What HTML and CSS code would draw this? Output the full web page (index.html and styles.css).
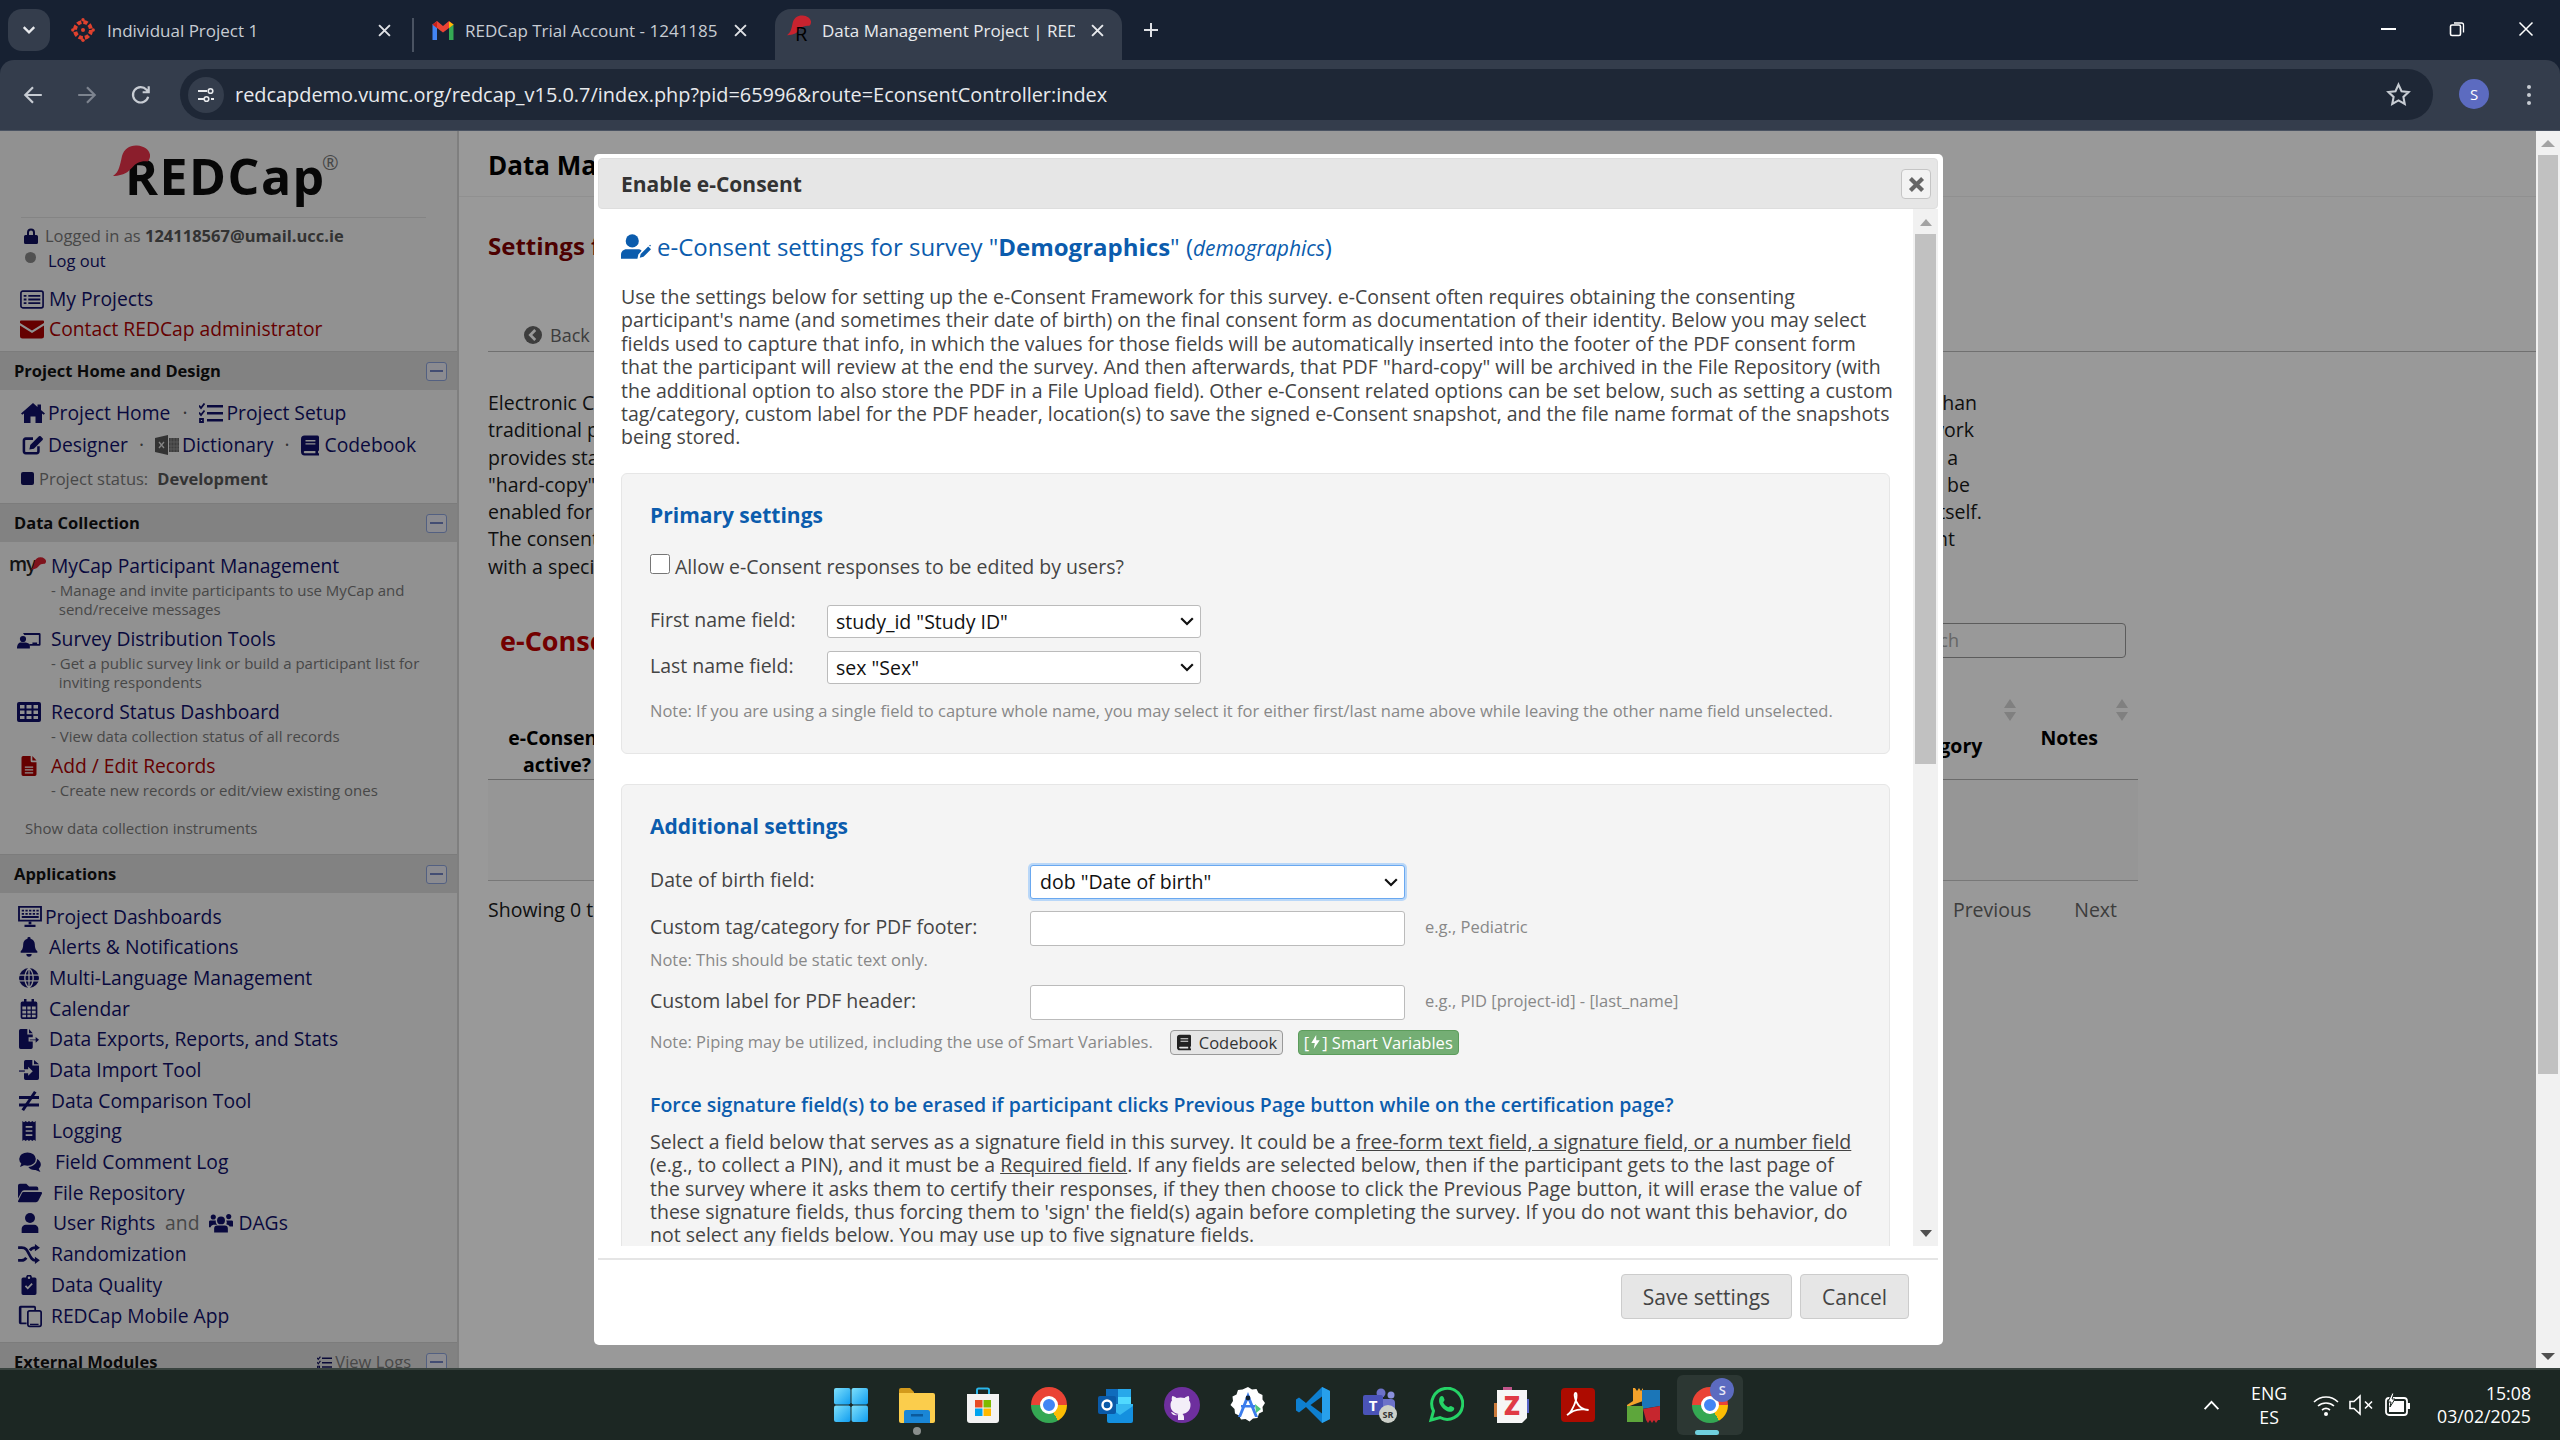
FILE: index.html
```html
<!DOCTYPE html>
<html lang="en">
<head>
<meta charset="utf-8">
<title>Data Management Project | REDCap</title>
<link rel="stylesheet" href="styles.css">
</head>
<body>
<svg class="sprite" xmlns="http://www.w3.org/2000/svg">
  <symbol id="i-list" viewBox="0 0 26 20"><rect x="1" y="1" width="24" height="18" rx="2" fill="none" stroke="currentColor" stroke-width="1.8"/><path d="M4 5h3v2H4zM9 5h13v2H9zM4 9h3v2H4zM9 9h13v2H9zM4 13h3v2H4zM9 13h13v2H9z" fill="currentColor"/></symbol>
  <symbol id="i-env" viewBox="0 0 24 18"><path d="M0 5v10.500A2.500 2.500 0 0 0 2.500 18h19a2.500 2.500 0 0 0 2.500-2.500V5l-12 7.500z M1 0h22a1 1 0 0 1 1 1v1.500l-12 7.500-12-7.500V1a1 1 0 0 1 1-1z" fill="currentColor"/></symbol>
  <symbol id="i-home" viewBox="0 0 24 20"><path d="M12 0 0 10.500l1.300 1.300L3 10.400V20h6.500v-6.500h5V20H21v-9.600l1.700 1.400 1.300-1.300L20 7V1.500h-3.500v2.400z" fill="currentColor"/></symbol>
  <symbol id="i-tasks" viewBox="0 0 24 20"><path d="M8 2h16v2.500H8zM8 9h16v2.500H8zM8 16h16v2.500H8z" fill="currentColor"/><path d="M0 2.500 2 5l3.500-4.500M0 9.500 2 12l3.500-4.500M1 16h3v3H1z" fill="none" stroke="currentColor" stroke-width="1.800"/></symbol>
  <symbol id="i-edit" viewBox="0 0 24 22"><path d="M18 12.500V18a2 2 0 0 1-2 2H4a2 2 0 0 1-2-2V6a2 2 0 0 1 2-2h8" fill="none" stroke="currentColor" stroke-width="2.800"/><path d="M9 11 18.500 1.500a1.500 1.500 0 0 1 2 0l2 2a1.500 1.500 0 0 1 0 2L13 15l-5 1z" fill="currentColor"/></symbol>
  <symbol id="i-xls" viewBox="0 0 24 20"><path d="M0 3 13 0v20L0 17z" fill="#555"/><path d="M14 3h10v14H14z" fill="#666"/><path d="M16 3v14M19 3v14M22 3v14M14 7h10M14 11h10M14 14h10" stroke="#999" stroke-width=".8"/><path d="m4 7 5 6M9 7l-5 6" stroke="#ddd" stroke-width="1.300"/></symbol>
  <symbol id="i-book" viewBox="0 0 20 22"><path d="M4 0h14a2 2 0 0 1 2 1.500V16a1 1 0 0 1-1 1v2.500h1V22H4a4 4 0 0 1-4-4V4a4 4 0 0 1 4-4zM5 5v1.500h11V5zM5 8.500V10h11V8.500zM4 17a1.300 1.300 0 0 0 0 2.500h12V17z" fill="currentColor" fill-rule="evenodd"/></symbol>
  <symbol id="i-survey" viewBox="0 0 28 22"><path d="M7 4h19a1.500 1.500 0 0 1 1.500 1.500v12a1.500 1.500 0 0 1-1.500 1.500H15v-2.200h3V15h5.500v1.800h2V6.200H8.500z" fill="currentColor"/><circle cx="7" cy="11" r="3.600" fill="currentColor"/><path d="M0 22c0-4.500 2-7 4-7h6c2 0 4 1.500 5 2v5z" fill="currentColor"/></symbol>
  <symbol id="i-table" viewBox="0 0 24 20"><path d="M2 0h20a2 2 0 0 1 2 2v16a2 2 0 0 1-2 2H2a2 2 0 0 1-2-2V2a2 2 0 0 1 2-2zm1 3v3.500h4.500V3zm6.500 0v3.500h5V3zm7 0v3.500H21V3zM3 8.500V12h4.500V8.500zm6.500 0V12h5V8.500zm7 0V12H21V8.500zM3 14v3h4.500v-3zm6.500 0v3h5v-3zm7 0v3H21v-3z" fill="currentColor" fill-rule="evenodd"/></symbol>
  <symbol id="i-file" viewBox="0 0 18 24"><path d="M2 0h9v6a1.500 1.500 0 0 0 1.500 1.500H18V22a2 2 0 0 1-2 2H2a2 2 0 0 1-2-2V2a2 2 0 0 1 2-2zm11 0 5 5.500h-5zM4 12.500v1.500h10v-1.500zm0 3.500v1.500h10V16zm0 3.500V21h10v-1.500z" fill="currentColor" fill-rule="evenodd"/></symbol>
  <symbol id="i-monitor" viewBox="0 0 26 24"><path d="M1 1h24v15H1z" fill="none" stroke="currentColor" stroke-width="2"/><path d="M4 4h2.500v2H4zM8 4h2.500v2H8zM12 4h2.500v2H12zM16 4h2.500v2H16zM20 4h2.500v2H20zM4 7.500h2.500v2H4zM8 7.500h2.500v2H8zM12 7.500h2.500v2H12zM16 7.500h2.500v2H16zM20 7.500h2.500v2H20zM4 11h18.500v2H4zM11.500 17h3v3h-3zM7 20.500h12V23H7z" fill="currentColor"/></symbol>
  <symbol id="i-bell" viewBox="0 0 20 24"><path d="M10 0a1.800 1.800 0 0 1 1.800 2.200C15 3 17 5.700 17 9c0 5 1.500 6.500 3 8.200V19H0v-1.800C1.500 15.500 3 14 3 9c0-3.300 2-6 5.200-6.800A1.800 1.800 0 0 1 10 0zM6.800 20.500h6.400a3.200 3.200 0 0 1-6.400 0z" fill="currentColor"/></symbol>
  <symbol id="i-globe" viewBox="0 0 24 24"><circle cx="12" cy="12" r="12" fill="currentColor"/><path d="M12 0c-3.300 3-5 7-5 12s1.700 9 5 12c3.300-3 5-7 5-12s-1.700-9-5-12zM0 8.500h24M0 15.500h24M12 0v24" fill="none" stroke="#f2f2f2" stroke-width="1.600"/></symbol>
  <symbol id="i-cal" viewBox="0 0 20 24"><path d="M4 0h3v3h6V0h3v3h2a2 2 0 0 1 2 2v17a2 2 0 0 1-2 2H2a2 2 0 0 1-2-2V5a2 2 0 0 1 2-2h2zM2 9v3.500h4.500V9zm6 0v3.500h4V9zm5.500 0v3.500H18V9zM2 14v3.500h4.500V14zm6 0v3.500h4V14zm5.500 0v3.500H18V14zM2 19v3h4.500v-3zm6 0v3h4v-3zm5.500 0v3H18v-3z" fill="currentColor" fill-rule="evenodd"/></symbol>
  <symbol id="i-fexport" viewBox="0 0 24 24"><path d="M2 0h8v6.500h6.500V10h-5v5h5v7a2 2 0 0 1-2 2H2a2 2 0 0 1-2-2V2a2 2 0 0 1 2-2zm10 0 4.500 5H12z" fill="currentColor"/><path d="M13 12.500h7v-3l4 3.500-4 3.500v-3h-7z" fill="currentColor"/></symbol>
  <symbol id="i-fimport" viewBox="0 0 24 24"><path d="M8 0h8v6.500h8V22a2 2 0 0 1-2 2H8a2 2 0 0 1-2-2v-6h5v3l5.500-5.500L11 8v3H6V2a2 2 0 0 1 2-2zm10 0 6 5h-6z" fill="currentColor"/><path d="M0 12.500h7v1.500H0z" fill="currentColor"/></symbol>
  <symbol id="i-neq" viewBox="0 0 20 20"><path d="M0 5h20v3H0zM0 12.500h20v3H0z" fill="currentColor"/><path d="m15 0 2.500 1.500L5 20l-2.500-1.500z" fill="currentColor"/></symbol>
  <symbol id="i-receipt" viewBox="0 0 16 24"><path d="M0 0l2 1.500L4 0l2 1.500L8 0l2 1.500L12 0l2 1.500L16 0v24l-2-1.500-2 1.500-2-1.500L8 24l-2-1.500L4 24l-2-1.500L0 24zM4 6v2h8V6zm0 5v2h8v-2zm0 5v2h8v-2z" fill="currentColor" fill-rule="evenodd"/></symbol>
  <symbol id="i-comments" viewBox="0 0 26 24"><ellipse cx="10" cy="8.500" rx="10" ry="8" fill="currentColor"/><path d="m3 13-2 5 7-3z" fill="currentColor"/><path d="M21.500 8.500c2.700 1.500 4.500 4 4.500 6.500 0 2-1 3.500-2.500 5l2 4-6-2.400c-3.500.5-7-1-8.500-3.600 5.500-.2 10.500-4 10.500-9.500z" fill="currentColor"/></symbol>
  <symbol id="i-folder" viewBox="0 0 26 20"><path d="M2 0h7l3 3h8a2 2 0 0 1 2 2v2H6.500a3 3 0 0 0-2.700 1.800L0 16V2a2 2 0 0 1 2-2z" fill="currentColor"/><path d="M6 9h19a1 1 0 0 1 1 1.500l-4 8A3 3 0 0 1 19.500 20H1a1 1 0 0 1-.8-1.500l4-8.200A2 2 0 0 1 6 9z" fill="currentColor"/></symbol>
  <symbol id="i-user" viewBox="0 0 20 24"><circle cx="10" cy="6" r="6" fill="currentColor"/><path d="M5 14h10a5 5 0 0 1 5 5v5H0v-5a5 5 0 0 1 5-5z" fill="currentColor"/></symbol>
  <symbol id="i-users" viewBox="0 0 28 22"><circle cx="14" cy="8" r="4.600" fill="currentColor"/><path d="M9.500 14h9a3.500 3.500 0 0 1 3.500 3.500V22H6v-4.500A3.500 3.500 0 0 1 9.500 14z" fill="currentColor"/><circle cx="5" cy="4" r="3" fill="currentColor"/><circle cx="23" cy="3.500" r="3" fill="currentColor"/><path d="M1 8h7c-.5 2.500.5 4 1.500 5H5c-1.800.5-3 1.500-3 3H0v-6a2 2 0 0 1 1-2zM20 8h7a2 2 0 0 1 1 2v5h-4c-.5-1-1.500-2-4-2.500 1-1 1-3 0-4.500z" fill="currentColor"/></symbol>
  <symbol id="i-random" viewBox="0 0 24 22"><path d="M0 4h4c5 0 6 3 8 7s3.500 7 7 7h1" fill="none" stroke="currentColor" stroke-width="3"/><path d="M0 18h4c2.500 0 4-1.500 5-3M13 7c1.500-2 3-3 6-3h1" fill="none" stroke="currentColor" stroke-width="3"/><path d="m18.500 0 5.500 4-5.500 4zM18.500 14l5.500 4-5.500 4z" fill="currentColor"/></symbol>
  <symbol id="i-clip" viewBox="0 0 18 24"><path d="M2 3h3.500a3.500 3.500 0 0 1 7 0H16a2 2 0 0 1 2 2v17a2 2 0 0 1-2 2H2a2 2 0 0 1-2-2V5a2 2 0 0 1 2-2zm7-1.300a1.500 1.500 0 1 0 0 3 1.500 1.500 0 0 0 0-3zM13.500 11l-1.500-1.400-4.500 4.800-2-2L4 13.800l3.500 3.600z" fill="currentColor" fill-rule="evenodd"/></symbol>
  <symbol id="i-mobile" viewBox="0 0 28 26"><path d="M3 1h16a2 2 0 0 1 2 2v3h-2V3.500H4v17h6v2H3a2 2 0 0 1-2-2V3a2 2 0 0 1 2-2z" fill="currentColor"/><rect x="11.500" y="7" width="15.500" height="18" rx="2" fill="none" stroke="currentColor" stroke-width="2"/><path d="M14 22h10v1.500H14z" fill="currentColor"/></symbol>
  <symbol id="i-hat" viewBox="0 0 37 32"><path d="M0 31c3-2 5-5 6-8 1-3 2-7 3-12C11 4 17 0 24 .5c7 .5 12 4 13 9 .3 3-.5 5-2.500 7-3-.5-7 0-10 1.500-4 2-6 6-10 9-3 2-9 4-14.500 4z" fill="currentColor"/></symbol>
  <symbol id="i-back" viewBox="0 0 20 20"><circle cx="10" cy="10" r="10" fill="currentColor"/><path d="M12.500 4.500 7 10l5.500 5.500" fill="none" stroke="#fff" stroke-width="3"/></symbol>
  <symbol id="i-consent" viewBox="0 0 32 26"><circle cx="12" cy="7" r="7" fill="currentColor"/><path d="M6 16h12c1.500 0 3 .5 4 1.500l-3.500 4-1 4.500H0v-4c0-3.500 2.500-6 6-6z" fill="currentColor"/><path d="M20 25l1-4 8-8 3 3-8 8zM30 12l1-1 1 1-1 1z" fill="currentColor"/></symbol>
  <symbol id="i-bolt" viewBox="0 0 12 20"><path d="M7 0 0 11.500h5L3.500 20 12 7.500H7z" fill="currentColor"/></symbol>
  <symbol id="i-chev" viewBox="0 0 14 9"><path d="m1.200 1.200 5.800 5.800 5.800-5.800" fill="none" stroke="currentColor" stroke-width="2.200"/></symbol>
</svg>

<div class="screen">
  <header class="browser">
    <div class="tabstrip">
      <div class="tab-menu"><svg class="tab-menu-ico" viewBox="0 0 12 8"><path d="m1.500 1.500 4.500 4.500 4.500-4.500" fill="none" stroke="#e8eaed" stroke-width="2"/></svg></div>
      <div class="tab tab-first">
        <svg class="fav" viewBox="0 0 24 24"><circle cx="12" cy="12" r="8" fill="none" stroke="#e0412e" stroke-width="4" stroke-dasharray="4.300 2"/><circle cx="12" cy="12" r="2" fill="#e0412e"/><circle cx="12" cy="1.800" r="1.700" fill="#e0412e"/><circle cx="12" cy="22.200" r="1.700" fill="#e0412e"/><circle cx="1.800" cy="12" r="1.700" fill="#e0412e"/><circle cx="22.200" cy="12" r="1.700" fill="#e0412e"/></svg>
        <span class="tab-title">Individual Project 1</span>
        <svg class="tab-x" viewBox="0 0 12 12"><path d="m1 1 10 10M11 1 1 11" stroke="#dfe1e5" stroke-width="1.800"/></svg>
      </div>
      <div class="tab-sep"></div>
      <div class="tab tab-second">
        <svg class="fav" viewBox="0 0 24 20"><path d="M1.500 20V4l4.500 3v13z" fill="#4285f4"/><path d="M22.500 20V4L18 7v13z" fill="#34a853"/><path d="M1.500 4.500 6 1l6 5 6-5 4.500 3.500L18 8l-6 4.500L6 8z" fill="#ea4335"/><path d="M18 1.500 22.500 4.500 18 8z" fill="#fbbc04"/><path d="M6 1.500 1.500 4.500 6 8z" fill="#c5221f"/></svg>
        <span class="tab-title">REDCap Trial Account - 124118567</span>
        <svg class="tab-x" viewBox="0 0 12 12"><path d="m1 1 10 10M11 1 1 11" stroke="#dfe1e5" stroke-width="1.800"/></svg>
      </div>
      <div class="tab tab-active">
        <span class="fav fav-red"><svg class="fav-hat" viewBox="0 0 37 32"><use href="#i-hat"/></svg><span class="fav-r">R</span></span>
        <span class="tab-title">Data Management Project | REDCap</span>
        <svg class="tab-x" viewBox="0 0 12 12"><path d="m1 1 10 10M11 1 1 11" stroke="#e8eaed" stroke-width="1.800"/></svg>
      </div>
      <svg class="tab-plus" viewBox="0 0 16 16"><path d="M8 1v14M1 8h14" stroke="#dfe1e5" stroke-width="2"/></svg>
      <div class="win-ctrl">
        <span class="win-min"></span>
        <svg class="win-ico" viewBox="0 0 16 16"><rect x="1.500" y="4" width="10" height="10.500" rx="1.500" fill="none" stroke="#fff" stroke-width="1.600"/><path d="M5 2h7.500A2 2 0 0 1 14.500 4v7.500" fill="none" stroke="#fff" stroke-width="1.300"/></svg>
        <svg class="win-ico" viewBox="0 0 16 16"><path d="m1.500 1.500 13 13M14.500 1.500l-13 13" stroke="#fff" stroke-width="1.500"/></svg>
      </div>
    </div>
    <div class="toolbar">
      <svg class="nav-ico" viewBox="0 0 20 20"><path d="M18 10H3M10 3l-7 7 7 7" fill="none" stroke="#c7ccd3" stroke-width="2"/></svg>
      <svg class="nav-ico nav-off" viewBox="0 0 20 20"><path d="M2 10h15M10 3l7 7-7 7" fill="none" stroke="#7d848f" stroke-width="2"/></svg>
      <svg class="nav-ico" viewBox="0 0 20 20"><path d="M16.500 11.500a7 7 0 1 1-1.500-6.300L17 7.500M17 2v5.500h-5.500" fill="none" stroke="#c7ccd3" stroke-width="2"/></svg>
      <div class="omnibox">
        <div class="site-ico"><svg class="site-svg" viewBox="0 0 20 20"><path d="M2 6h9M15 14h3M2 14h6" stroke="#e8eaed" stroke-width="1.800"/><circle cx="14.500" cy="6" r="2.300" fill="none" stroke="#e8eaed" stroke-width="1.600"/><circle cx="10.500" cy="14" r="2.300" fill="none" stroke="#e8eaed" stroke-width="1.600"/></svg></div>
        <span class="url">redcapdemo.vumc.org/redcap_v15.0.7/index.php?pid=65996&amp;route=EconsentController:index</span>
        <svg class="star" viewBox="0 0 24 24"><path d="m12 2.500 2.900 6.300 6.800.8-5 4.700 1.300 6.800-6-3.400-6 3.400 1.300-6.800-5-4.700 6.800-.8z" fill="none" stroke="#c7ccd3" stroke-width="2"/></svg>
      </div>
      <div class="avatar">S</div>
      <svg class="kebab" viewBox="0 0 6 22"><circle cx="3" cy="3" r="2" fill="#c7ccd3"/><circle cx="3" cy="11" r="2" fill="#c7ccd3"/><circle cx="3" cy="19" r="2" fill="#c7ccd3"/></svg>
    </div>
  </header>

  <div class="page">
    <aside class="sidebar">
      <div class="logo">
        <span class="logo-text">REDCap</span><span class="logo-reg">®</span>
        <svg class="logo-hat" viewBox="0 0 37 32"><use href="#i-hat"/></svg>
      </div>
      <div class="user-block">
        <div class="user-row"><svg class="ico-lock" viewBox="0 0 14 16"><path d="M3 7V4.500a4 4 0 0 1 8 0V7h1.500A1.500 1.500 0 0 1 14 8.500v6a1.500 1.500 0 0 1-1.500 1.500h-11A1.500 1.500 0 0 1 0 14.500v-6A1.500 1.500 0 0 1 1.500 7zm2 0h4V4.500a2 2 0 0 0-4 0z" fill="#10105c" fill-rule="evenodd"/></svg><span>Logged in as <b>124118567@umail.ucc.ie</b></span></div>
        <div class="user-row user-out"><span class="ico-out"></span><span class="link">Log out</span></div>
      </div>
      <div class="top-links">
        <div class="top-link link"><svg class="ico-top"><use href="#i-list"/></svg>My Projects</div>
        <div class="top-link red"><svg class="ico-top"><use href="#i-env"/></svg>Contact REDCap administrator</div>
      </div>

      <div class="side-head"><span>Project Home and Design</span><span class="collapse"></span></div>
      <div class="home-block">
        <div class="home-row link"><svg class="ico-h"><use href="#i-home"/></svg>Project Home<span class="dot dot-w">·</span><svg class="ico-h"><use href="#i-tasks"/></svg>Project Setup</div>
        <div class="home-row link"><svg class="ico-h"><use href="#i-edit"/></svg>Designer<span class="dot">·</span><svg class="ico-h"><use href="#i-xls"/></svg>Dictionary<span class="dot">·</span><svg class="ico-h ico-b"><use href="#i-book"/></svg>Codebook</div>
        <div class="status-row"><span class="status-sq"></span>Project status:<b>Development</b></div>
      </div>

      <div class="side-head"><span>Data Collection</span><span class="collapse"></span></div>
      <div class="dc-block">
        <div class="dc-item"><div class="dc-link link"><span class="mycap">my<svg class="mycap-hat" viewBox="0 0 37 32"><use href="#i-hat"/></svg></span>MyCap Participant Management</div><div class="dc-desc">- Manage and invite participants to use MyCap and<br>&nbsp; send/receive messages</div></div>
        <div class="dc-item"><div class="dc-link link"><svg class="ico-dc"><use href="#i-survey"/></svg>Survey Distribution Tools</div><div class="dc-desc">- Get a public survey link or build a participant list for<br>&nbsp; inviting respondents</div></div>
        <div class="dc-item"><div class="dc-link link"><svg class="ico-dc"><use href="#i-table"/></svg>Record Status Dashboard</div><div class="dc-desc">- View data collection status of all records</div></div>
        <div class="dc-item"><div class="dc-link red"><svg class="ico-dc"><use href="#i-file"/></svg>Add / Edit Records</div><div class="dc-desc">- Create new records or edit/view existing ones</div></div>
        <div class="dc-show">Show data collection instruments</div>
      </div>

      <div class="side-head side-apps"><span>Applications</span><span class="collapse"></span></div>
      <div class="apps link">
        <div class="app"><svg class="ico-a ico-mon"><use href="#i-monitor"/></svg>Project Dashboards</div>
        <div class="app"><svg class="ico-a"><use href="#i-bell"/></svg>Alerts &amp; Notifications</div>
        <div class="app"><svg class="ico-a"><use href="#i-globe"/></svg>Multi-Language Management</div>
        <div class="app"><svg class="ico-a"><use href="#i-cal"/></svg>Calendar</div>
        <div class="app"><svg class="ico-a"><use href="#i-fexport"/></svg>Data Exports, Reports, and Stats</div>
        <div class="app"><svg class="ico-a"><use href="#i-fimport"/></svg>Data Import Tool</div>
        <div class="app"><svg class="ico-a ico-nudge"><use href="#i-neq"/></svg>Data Comparison Tool</div>
        <div class="app"><svg class="ico-a ico-nudge2"><use href="#i-receipt"/></svg>Logging</div>
        <div class="app"><svg class="ico-a ico-wide ico-wide2"><use href="#i-comments"/></svg>Field Comment Log</div>
        <div class="app"><svg class="ico-a ico-wide"><use href="#i-folder"/></svg>File Repository</div>
        <div class="app"><svg class="ico-a ico-wide"><use href="#i-user"/></svg>User Rights<span class="and">and</span><svg class="ico-users"><use href="#i-users"/></svg>DAGs</div>
        <div class="app"><svg class="ico-a ico-nudge"><use href="#i-random"/></svg>Randomization</div>
        <div class="app"><svg class="ico-a ico-nudge"><use href="#i-clip"/></svg>Data Quality</div>
        <div class="app"><svg class="ico-a ico-mob"><use href="#i-mobile"/></svg>REDCap Mobile App</div>
      </div>
      <div class="side-head side-last"><span>External Modules</span><span class="viewlogs"><svg class="ico-vl"><use href="#i-tasks"/></svg>View Logs</span><span class="collapse"></span></div>
    </aside>

    <main class="content">
      <div class="proj-title">Data Management Project</div>
      <div class="content-body">
        <div class="settings-title">Settings for e-Consent</div>
        <div class="back-tabs"><div class="back-tab"><svg class="ico-back"><use href="#i-back"/></svg>Back to Online Designer</div></div>
        <div class="intro">
          <div class="intro-line e1"><span>Electronic Consent</span><span>than</span></div>
          <div class="intro-line e2"><span>traditional paper</span><span>work</span></div>
          <div class="intro-line e3"><span>provides standard</span><span>a</span></div>
          <div class="intro-line e4"><span>"hard-copy" of the</span><span>be</span></div>
          <div class="intro-line e5"><span>enabled for a</span><span>itself.</span></div>
          <div class="intro-line e6"><span>The consent form</span><span>nt</span></div>
          <div class="intro-line"><span>with a specific</span></div>
        </div>
        <div class="econ-row"><div class="econ-title">e-Consent</div><div class="search">Search</div></div>
        <div class="thead">
          <div class="th-first">e-Consent<br>active?</div>
          <div class="th-cat">Category</div>
          <div class="sort sort-a"></div>
          <div class="th-notes">Notes</div>
          <div class="sort"></div>
        </div>
        <div class="tbody-empty"></div>
        <div class="tfoot"><span>Showing 0 to 0</span><span class="pager"><span>Previous</span><span>Next</span></span></div>
      </div>
    </main>

    <div class="overlay"></div>

    <div class="page-scroll">
      <span class="arr-up arr-dark"></span>
      <div class="page-thumb"></div>
      <span class="arr-down arr-dark"></span>
    </div>
  </div>

  <section class="modal">
    <div class="modal-title"><span>Enable e-Consent</span><button class="modal-x"><svg class="modal-x-ico" viewBox="0 0 14 14"><path d="m2 2 10 10M12 2 2 12" stroke="#666" stroke-width="3.400"/></svg></button></div>
    <div class="modal-mid">
      <div class="modal-body">
        <div class="m-head"><svg class="ico-consent"><use href="#i-consent"/></svg><span>e-Consent settings for survey "<b>Demographics</b>" (<i>demographics</i>)</span></div>
        <p class="m-text m-intro">Use the settings below for setting up the e-Consent Framework for this survey. e-Consent often requires obtaining the consenting<br>participant's name (and sometimes their date of birth) on the final consent form as documentation of their identity. Below you may select<br>fields used to capture that info, in which the values for those fields will be automatically inserted into the footer of the PDF consent form<br>that the participant will review at the end the survey. And then afterwards, that PDF "hard-copy" will be archived in the File Repository (with<br>the additional option to also store the PDF in a File Upload field). Other e-Consent related options can be set below, such as setting a custom<br>tag/category, custom label for the PDF header, location(s) to save the signed e-Consent snapshot, and the file name format of the snapshots<br>being stored.</p>

        <div class="box box-primary">
          <div class="box-title">Primary settings</div>
          <label class="check-row"><input class="check" type="checkbox">Allow e-Consent responses to be edited by users?</label>
          <div class="f-row f-first"><span class="f-label f-short">First name field:</span><span class="sel-wrap sel-a"><select class="sel"><option>study_id "Study ID"</option></select><svg class="sel-chev"><use href="#i-chev"/></svg></span></div>
          <div class="f-row f-second"><span class="f-label f-short">Last name field:</span><span class="sel-wrap sel-a"><select class="sel"><option>sex "Sex"</option></select><svg class="sel-chev"><use href="#i-chev"/></svg></span></div>
          <div class="note note-a">Note: If you are using a single field to capture whole name, you may select it for either first/last name above while leaving the other name field unselected.</div>
        </div>

        <div class="box box-add">
          <div class="box-title">Additional settings</div>
          <div class="f-row f-dob"><span class="f-label f-long">Date of birth field:</span><span class="sel-wrap sel-b"><select class="sel sel-focus"><option>dob "Date of birth"</option></select><svg class="sel-chev"><use href="#i-chev"/></svg></span></div>
          <div class="f-row f-tag"><span class="f-label f-long">Custom tag/category for PDF footer:</span><input class="txt" type="text"><span class="eg">e.g., Pediatric</span></div>
          <div class="note note-b">Note: This should be static text only.</div>
          <div class="f-row f-hdr"><span class="f-label f-long">Custom label for PDF header:</span><input class="txt" type="text"><span class="eg">e.g., PID [project-id] - [last_name]</span></div>
          <div class="pipe-row"><span class="note">Note: Piping may be utilized, including the use of Smart Variables.</span><span class="btn-code"><svg class="ico-code"><use href="#i-book"/></svg>Codebook</span><span class="btn-smart">[<svg class="ico-bolt"><use href="#i-bolt"/></svg>] Smart Variables</span></div>
          <div class="force-title">Force signature field(s) to be erased if participant clicks Previous Page button while on the certification page?</div>
          <p class="m-text m-force">Select a field below that serves as a signature field in this survey. It could be a <u>free-form text field, a signature field, or a number field</u><br>(e.g., to collect a PIN), and it must be a <u>Required field</u>. If any fields are selected below, then if the participant gets to the last page of<br>the survey where it asks them to certify their responses, if they then choose to click the Previous Page button, it will erase the value of<br>these signature fields, thus forcing them to 'sign' the field(s) again before completing the survey. If you do not want this behavior, do<br>not select any fields below. You may use up to five signature fields.</p>
        </div>
      </div>
      <div class="modal-scroll">
        <span class="arr-up"></span>
        <div class="modal-thumb"></div>
        <span class="arr-down"></span>
      </div>
    </div>
    <div class="modal-foot"><button class="btn">Save settings</button><button class="btn">Cancel</button></div>
  </section>

  <footer class="taskbar">
    <div class="task-icons">
      <span class="task"><svg class="t-ico" viewBox="0 0 36 36"><defs><linearGradient id="w" x1="0" y1="0" x2="1" y2="1"><stop offset="0" stop-color="#7ee0fb"/><stop offset="1" stop-color="#0f9df0"/></linearGradient></defs><rect x="1" y="1" width="16.500" height="16.500" rx="2" fill="url(#w)"/><rect x="18.500" y="1" width="16.500" height="16.500" rx="2" fill="url(#w)"/><rect x="1" y="18.500" width="16.500" height="16.500" rx="2" fill="url(#w)"/><rect x="18.500" y="18.500" width="16.500" height="16.500" rx="2" fill="url(#w)"/></svg></span>
      <span class="task"><svg class="t-ico" viewBox="0 0 36 36"><path d="M0 3a2 2 0 0 1 2-2h9l4 4v4H0z" fill="#d39a1c"/><path d="M0 6h34a2 2 0 0 1 2 2v26a2 2 0 0 1-2 2H2a2 2 0 0 1-2-2z" fill="#fbcd4c"/><path d="M7 23h22a2 2 0 0 1 2 2v11H5V25a2 2 0 0 1 2-2z" fill="#1a86d6"/><rect x="12" y="27" width="12" height="2.500" fill="#0b5a9c"/></svg><i class="t-dot"></i></span>
      <span class="task"><svg class="t-ico" viewBox="0 0 36 36"><path d="M12 8V3a1.500 1.500 0 0 1 1.500-1.500h9A1.500 1.500 0 0 1 24 3v5" fill="none" stroke="#29b6ea" stroke-width="2"/><path d="M2 7h32v26a3 3 0 0 1-3 3H5a3 3 0 0 1-3-3z" fill="#f3f3f3"/><rect x="10" y="13" width="7.500" height="7.500" fill="#e74c25"/><rect x="18.500" y="13" width="7.500" height="7.500" fill="#7fba00"/><rect x="10" y="21.500" width="7.500" height="7.500" fill="#00a4ef"/><rect x="18.500" y="21.500" width="7.500" height="7.500" fill="#ffb900"/></svg></span>
      <span class="task"><span class="chrome-ico"><span class="chrome-in"></span></span></span>
      <span class="task"><svg class="t-ico" viewBox="0 0 36 36"><rect x="9" y="2" width="25" height="16" fill="#0f6cbd"/><rect x="21" y="2" width="13" height="8" fill="#28a8ea"/><rect x="21" y="10" width="13" height="8" fill="#50d9ff"/><path d="M10 17h26v17a2 2 0 0 1-2 2H12a2 2 0 0 1-2-2z" fill="#1490df"/><path d="m10 19 13 9 13-9v-2H10z" fill="#35b8f1"/><rect x="1" y="9" width="18" height="18" rx="2" fill="#0a5aa8"/><circle cx="10" cy="18" r="4.500" fill="none" stroke="#fff" stroke-width="2.400"/></svg></span>
      <span class="task"><svg class="t-ico" viewBox="0 0 36 36"><circle cx="18" cy="18" r="18" fill="#6e2f9e"/><path d="M14 33v-5c-5 1-6-1-7-3 2 0 3 1 4 2 1 1 3 1 3.500 0-5-1-8-4-8-9 0-2 .5-3.500 1.500-4.500-.5-1.500-.3-3 .3-4.500 1.700 0 3 1 4.200 2 2.800-.7 5.400-.7 8 0 1.200-1 2.500-2 4.200-2 .6 1.500.8 3 .3 4.500 1 1 1.500 2.500 1.500 4.500 0 5-3 8-8 9 1 .7 1.500 2 1.500 3.500V33z" fill="#f3eef8"/></svg></span>
      <span class="task"><svg class="t-ico" viewBox="0 0 36 36"><path d="m18 0 4 2.500 4.500-.5 2 4 4 2 .0 4.500 2.500 3.500-2.500 4 .5 4.500-4 2-1.500 4.500-4.500.5-3.500 3-4-2.500-4.500.5-2-4-4-2-.5-4.500L.5 18 3 14l-.5-4.500 4-2L8 3l4.500-.5z" fill="#fff"/><path d="m18 5-10 25h3l7-17 7 17h3z" fill="#3b7ded"/><path d="M11 18h14v2.500H11z" fill="#3b7ded"/><path d="m25 17 6 5-5 4z" fill="#4cc47a"/><circle cx="18" cy="11" r="2.400" fill="#123"/></svg></span>
      <span class="task"><svg class="t-ico" viewBox="0 0 36 36"><path d="M26 0 10 16 3 10.500 0 12.500v11L3 25.500l7-5.500 16 16 8-4V4z" fill="#0e7fd0"/><path d="M26 9.500v17L14.500 18z" fill="#1c2723"/><path d="M26 0l8 4v28l-8 4z" fill="#27a0ec"/></svg></span>
      <span class="task"><svg class="t-ico" viewBox="0 0 36 36"><circle cx="19" cy="6" r="4.500" fill="#6c72c9"/><circle cx="29" cy="8" r="3.500" fill="#8a90dd"/><path d="M14 12h15a4 4 0 0 1 4 4v10H14z" fill="#6c72c9"/><rect x="1" y="8" width="20" height="20" rx="2" fill="#4a53b8"/><text class="t-letter" x="11" y="23.500">T</text><circle cx="26" cy="27" r="9" fill="#ccd0c9"/><text class="t-sr" x="26" y="30.500">SR</text></svg></span>
      <span class="task"><svg class="t-ico" viewBox="0 0 36 36"><path d="M3 33 5.500 24A15.500 15.500 0 1 1 12 30.500z" fill="none" stroke="#25d366" stroke-width="3"/><path d="M12 10c1-1 2.500-1.500 3.500 0l1 2.500c.3 1-1 2-1.300 2.800.8 2 2.800 4 5 5 1-.3 1.800-1.500 2.800-1.300l2.500 1.200c1.300.7.700 2.500 0 3.300-2 2-5 1.500-8-.3-3-2-5-4.500-6-7-.7-2.300-.5-4.500.500-6.200z" fill="#25d366"/></svg></span>
      <span class="task"><svg class="t-ico" viewBox="0 0 36 36"><rect x="9" y="0" width="9" height="6" fill="#c0558a"/><path d="M0 16h5v14H0z" fill="#ca7a3a"/><path d="M32 12h3v14h-3z" fill="#5865c7"/><path d="M3 3h30v28l-5 5H3z" fill="#f6f6f6"/><text class="t-z" x="18" y="28">Z</text></svg></span>
      <span class="task"><svg class="t-ico" viewBox="0 0 36 36"><rect x="1" y="1" width="34" height="34" rx="4" fill="#ad0b00"/><path d="M7 28c3-1 7-8 9-15 .7-3 1-7-.5-7-1.500 0-1 5 1 9 2.500 5 6 8 12 8-3-1-10-1-15 1-2 1-5 3-6.500 4z" fill="none" stroke="#fff" stroke-width="1.800"/></svg></span>
      <span class="task"><svg class="t-ico" viewBox="0 0 36 36"><path d="M1 18 7 14V1h2l2 3 2-3 2 3 2-3v13L1 20z" fill="#f4a22b"/><path d="M16 3h18v16l-18 3z" fill="#1b76b8"/><path d="M1 19h16v16H1z" fill="#5da63b"/><path d="M17 22l17-3v14h-2l-2 3-2-3-2 3-2-3-2 3-2-3z" fill="#c6262e"/></svg></span>
      <span class="task task-active"><span class="chrome-ico"><span class="chrome-in"></span></span><span class="t-badge">S</span><i class="t-bar"></i></span>
    </div>
    <div class="tray">
      <svg class="tray-chev" viewBox="0 0 18 12"><path d="m1.500 10 7.500-8 7.500 8" fill="none" stroke="#fff" stroke-width="2"/></svg>
      <div class="lang">ENG<br>ES</div>
      <svg class="tray-wifi" viewBox="0 0 26 22"><path d="M1 8a17 17 0 0 1 24 0M5 12a12 12 0 0 1 16 0M9 16a6.500 6.500 0 0 1 8 0" fill="none" stroke="#fff" stroke-width="1.600"/><circle cx="13" cy="20" r="2" fill="#fff"/></svg>
      <svg class="tray-vol" viewBox="0 0 26 22"><path d="M1 7.500h4L11 2v18l-6-5.500H1z" fill="none" stroke="#fff" stroke-width="1.600"/><path d="m16 7.500 7 7M23 7.500l-7 7" stroke="#fff" stroke-width="1.600"/></svg>
      <svg class="tray-bat" viewBox="0 0 26 24"><rect x="1" y="5" width="21" height="17" rx="3" fill="none" stroke="#fff" stroke-width="1.800"/><rect x="4" y="8" width="15" height="11" fill="#fff"/><path d="M22 10h3v6h-3z" fill="#fff"/><path d="M7 0 3 9h3l-1 5 5-8H7l2-6z" fill="#fff" stroke="#1c2723"/></svg>
      <div class="clock"><div>15:08</div><div>03/02/2025</div></div>
    </div>
  </footer>
</div>
</body>
</html>
```
FILE: styles.css
```css
* { box-sizing: border-box; }
html, body { margin: 0; padding: 0; }
body { width: 2560px; height: 1440px; overflow: hidden; font-family: "Open Sans", "Noto Sans", sans-serif; background: #fff; color: #000; }
.sprite { display: none; }
.screen { position: relative; width: 2560px; height: 1440px; display: flex; flex-direction: column; overflow: hidden; }

/* browser chrome */
.browser { height: 131px; background: #172132; flex: none; display: flex; flex-direction: column; }
.tabstrip { height: 60px; display: flex; align-items: flex-start; padding: 9px 0 0 8px; color: #c7ccd3; font-size: 17px; }
.tab-menu { width: 42px; height: 42px; border-radius: 14px; background: #343d4c; display: flex; align-items: center; justify-content: center; }
.tab-menu-ico { width: 14px; height: 10px; }
.tab { height: 51px; display: flex; align-items: center; position: relative; padding-bottom: 9px; }
.tab-first { width: 351px; margin-left: 11px; padding-left: 10px; }
.tab-sep { width: 2px; height: 34px; background: #4a5362; margin: 9px 0 0; }
.tab-second { width: 361px; padding-left: 17px; }
.tab-active { width: 347px; background: #343d4c; border-radius: 16px 16px 0 0; padding-left: 13px; color: #e8eaed; }
.fav { width: 24px; height: 24px; flex: none; }
.fav-red { position: relative; display: block; }
.fav-hat { position: absolute; left: -1px; top: -3px; width: 24px; height: 21px; color: #c8232f; }
.fav-r { position: absolute; left: 7px; top: 4px; font-size: 20px; line-height: 24px; color: #000; }
.tab-title { flex: 1; margin-left: 10px; white-space: nowrap; overflow: hidden; min-width: 0; font-size: 17px; }
.tab-first .tab-title { margin-left: 12px; }
.tab-second .tab-title { margin-right: 16px; }
.tab-active .tab-title { margin-right: 16px; }
.tab-x { width: 13px; height: 13px; flex: none; margin-right: 18px; }
.tab-first .tab-x { margin-right: 21px; }
.tab-second .tab-x { margin-right: 28px; }
.tab-plus { width: 16px; height: 16px; margin: 13px 0 0 21px; }
.win-ctrl { margin-left: auto; margin-top: 11px; display: flex; align-items: center; gap: 53px; padding-right: 26px; height: 18px; }
.win-min { width: 15px; height: 2px; background: #fff; }
.win-ico { width: 16px; height: 16px; }

.toolbar { height: 71px; background: #343d4c; border-radius: 14px 14px 0 0; border-bottom: 1px solid #4a5362; display: flex; align-items: flex-start; padding: 9px 0 0 22px; }
.nav-ico { width: 22px; height: 22px; margin: 15px 32px 0 0; flex: none; }
.omnibox { width: 2253px; height: 51px; background: #1e2736; border-radius: 26px; display: flex; align-items: center; padding-left: 8px; margin-left: -4px; }
.site-ico { width: 36px; height: 36px; border-radius: 50%; background: #343d4c; display: flex; align-items: center; justify-content: center; flex: none; }
.site-svg { width: 20px; height: 20px; }
.url { margin-left: 11px; color: #e8eaed; font-size: 19.900px; white-space: nowrap; }
.star { width: 25px; height: 25px; margin-left: auto; margin-right: 22px; }
.avatar { width: 30px; height: 30px; border-radius: 50%; background: #5c6bc0; color: #fff; font-size: 15px; display: flex; align-items: center; justify-content: center; margin: 10px 0 0 26px; }
.kebab { width: 6px; height: 22px; margin: 15px 0 0 37px; }

/* page */
.page { position: relative; flex: 1; display: flex; min-height: 0; overflow: hidden; background: #fff; }
.overlay { position: absolute; left: 0; top: 0; bottom: 0; right: 24px; background: rgba(0,0,0,.4); }
.page-scroll { width: 24px; flex: none; background: #f1f1f1; position: relative; z-index: 2; display: flex; flex-direction: column; align-items: center; padding: 9px 0 8px; }
.page-thumb { width: 20px; height: 919px; background: #c1c1c1; margin-top: 8px; }
.arr-up { width: 0; height: 0; border: 6px solid transparent; border-top: 0; border-bottom: 7px solid #a3a3a3; flex: none; }
.arr-down { width: 0; height: 0; border: 6px solid transparent; border-bottom: 0; border-top: 7px solid #505050; flex: none; margin-top: auto; }
.arr-dark { border-left-width: 7px; border-right-width: 7px; }

/* sidebar */
.sidebar { width: 459px; flex: none; background: #f2f2f2; border-right: 2px solid #d4d4d4; font-size: 19.300px; line-height: 30px; overflow: hidden; }
.link { color: #101068; }
.red { color: #a80000; }
.logo { height: 87px; margin: 0 31px 0 21px; border-bottom: 1px solid #ddd; position: relative; }
.logo-hat { position: absolute; left: 92px; top: 14px; width: 37px; height: 32px; color: #e8334a; }
.logo-text { position: absolute; left: 104px; top: 9px; font-size: 50px; line-height: 72px; font-weight: 700; color: #0d0d0d; letter-spacing: 1.500px; white-space: nowrap; }
.logo-reg { position: absolute; left: 301px; top: 20px; font-size: 20px; line-height: 24px; color: #777; }
.user-block { padding: 5px 0 0 24px; font-size: 16.500px; line-height: 25px; color: #777; }
.user-block b { color: #555; }
.user-row { display: flex; align-items: center; }
.ico-lock { width: 14px; height: 16px; margin-right: 7px; }
.user-out { padding-left: 1px; }
.ico-out { width: 11px; height: 11px; border-radius: 50%; background: #888; margin: -7px 12px 0 0; }
.top-links { padding: 11px 0 7px 20px; }
.top-link { display: flex; align-items: center; }
.ico-top { width: 24px; height: 19px; margin-right: 5px; }
.side-head { height: 39px; background: #d9d9d9; border-top: 1px solid #cfcfcf; display: flex; align-items: center; justify-content: space-between; padding: 0 10px 0 14px; font-size: 16.500px; font-weight: 700; color: #111; }
.collapse { width: 21px; height: 19px; border: 1.500px solid #8ba0d8; border-radius: 3px; background: #e8e8f0; position: relative; flex: none; }
.collapse::after { content: ""; position: absolute; left: 3px; right: 3px; top: 7px; height: 2px; background: #7080c0; }
.home-block { padding: 7px 0 8px 21px; }
.home-row { height: 32px; line-height: 32px; display: flex; align-items: center; white-space: nowrap; }
.ico-h { width: 24px; height: 20px; margin-right: 3px; flex: none; }
.ico-b { width: 18px; height: 21px; margin-right: 6px; }
.dot { margin: 0 11px; color: #555; }
.dot-w { margin: 0 12px; }
.status-row { height: 33px; margin-top: 1px; display: flex; align-items: center; font-size: 16.500px; color: #777; }
.status-row b { margin-left: 9px; color: #555; }
.status-sq { width: 13px; height: 13px; background: #10105c; border-radius: 2px; margin-right: 5px; }
.dc-block { padding: 9px 0 0 0; }
.dc-item { margin-bottom: 5.500px; padding-left: 51px; }
.dc-link { height: 30px; display: flex; align-items: center; position: relative; white-space: nowrap; }
.dc-desc { font-size: 15px; line-height: 18.700px; color: #777; white-space: nowrap; }
.mycap { position: absolute; left: -42px; top: -2px; font-size: 19px; color: #222; font-weight: 600; letter-spacing: -1px; }
.mycap-hat { position: absolute; left: 22px; top: 7px; width: 15px; height: 15px; color: #d42030; }
.ico-dc { position: absolute; left: -34px; top: 5px; width: 24px; height: 20px; }
.dc-show { padding: 13px 0 0 25px; font-size: 15px; line-height: 20px; color: #777; height: 49px; }
.apps { padding: 8px 0 0 18px; height: 449px; }
.app { height: 30.700px; display: flex; align-items: center; white-space: nowrap; }
.ico-a { width: 22px; height: 20px; margin-right: 9px; flex: none; }
.ico-mon { width: 24px; height: 22px; margin-right: 3px; }
.ico-nudge { margin-right: 11px; }
.ico-nudge2 { margin-right: 12px; }
.ico-wide { width: 24px; margin-right: 11px; }
.ico-wide2 { margin-right: 13px; }
.ico-mob { width: 24px; height: 24px; margin-right: 9px; }
.and { color: #777; margin: 0 10px; }
.ico-users { width: 24px; height: 20px; margin-right: 5px; }
.viewlogs { margin-left: auto; margin-right: 15px; font-size: 16.500px; font-weight: 400; color: #777; display: flex; align-items: center; }
.ico-vl { width: 15px; height: 13px; margin-right: 3px; color: #10105c; }

/* main content */
.content { flex: 1; min-width: 0; position: relative; color: #1a1a1a; font-size: 19.500px; }
.proj-title { height: 66px; padding: 16px 0 0 29px; font-size: 26px; line-height: 36px; font-weight: 700; color: #000; border-bottom: 1px solid #f0f0f0; white-space: nowrap; }
.content-body { padding-left: 29px; }
.settings-title { margin-top: 31px; font-size: 24px; line-height: 36px; font-weight: 700; color: #800000; }
.back-tabs { height: 88px; border-bottom: 1px solid #bbb; padding-top: 55px; }
.back-tab { display: flex; align-items: center; margin-left: 36px; height: 32px; font-size: 18px; color: #666; white-space: nowrap; }
.ico-back { width: 18px; height: 18px; margin-right: 8px; }
.intro { width: 1650px; margin-top: 37px; line-height: 27.300px; }
.intro-line { display: flex; justify-content: space-between; white-space: nowrap; }
.e1 { padding-right: 161px; } .e2 { padding-right: 164px; } .e3 { padding-right: 180px; } .e4 { padding-right: 168px; } .e5 { padding-right: 156px; } .e6 { padding-right: 183px; }
.econ-row { width: 1650px; display: flex; justify-content: space-between; margin-top: 41px; height: 40px; padding-left: 12px; }
.econ-title { font-size: 27px; line-height: 40px; font-weight: 700; color: #c00000; }
.search { width: 300px; height: 35px; margin: 2px 12px 0 0; border: 1px solid #999; border-radius: 4px; padding-left: 75px; line-height: 33px; font-size: 18px; color: #aaa; }
.thead { width: 1650px; height: 99px; border-bottom: 1px solid #b2b2b2; margin-top: 20px; position: relative; display: flex; align-items: flex-start; font-weight: 700; font-size: 19.500px; line-height: 27px; color: #000; padding-top: 43px; }
.th-first { width: 138px; text-align: center; }
.th-cat { margin-left: auto; margin-top: 8px; margin-right: 22px; }
.sort { width: 12px; height: 20px; margin: -22px 10px 0 0; position: relative; flex: none; }
.sort::before, .sort::after { content: ""; position: absolute; left: 0; width: 0; height: 0; border: 6px solid transparent; }
.sort::before { top: -3px; border-top: 0; border-bottom: 9px solid #d5d5d5; }
.sort::after { top: 10px; border-bottom: 0; border-top: 9px solid #d5d5d5; }
.sort-a { margin-right: 24px; }
.th-notes { margin-right: 18px; margin-top: 0; }
.tbody-empty { width: 1650px; height: 101px; background: #fbfbfb; border-bottom: 1px solid #c8c8c8; }
.tfoot { width: 1650px; display: flex; justify-content: space-between; margin-top: 14px; line-height: 30px; padding-right: 21px; color: #1a1a1a; }
.pager { display: flex; gap: 43px; color: #666; font-size: 19.500px; }

/* modal */
.modal { position: absolute; left: 594px; top: 154px; width: 1349px; height: 1191px; background: #fff; border-radius: 5px; padding: 4px 5px 0 4px; z-index: 5; display: flex; flex-direction: column; }
.modal-title { height: 51px; flex: none; background: #e6e6e6; border: 1px solid #dedede; border-radius: 4px; display: flex; align-items: center; justify-content: space-between; padding: 0 6px 0 22px; font-size: 21px; font-weight: 700; color: #333; }
.modal-x { width: 30px; height: 30px; padding: 0; background: #f3f3f3; border: 1px solid #c5c5c5; border-radius: 4px; display: flex; align-items: center; justify-content: center; margin-top: 1px; }
.modal-x-ico { width: 17px; height: 17px; }
.modal-mid { height: 1037px; flex: none; display: flex; }
.modal-body { flex: 1; min-width: 0; overflow: hidden; padding: 22px 23px 0 23px; color: #444; }
.modal-scroll { width: 25px; flex: none; background: #f1f1f1; display: flex; flex-direction: column; align-items: center; padding: 10px 0 9px; }
.modal-thumb { width: 21px; height: 530px; background: #c1c1c1; margin-top: 8px; }
.m-head { height: 30px; display: flex; align-items: center; font-size: 24px; color: #0b5cad; white-space: nowrap; }
.m-head b { font-weight: 700; }
.m-head i { font-size: 21px; }
.ico-consent { width: 30px; height: 25px; margin-right: 6px; flex: none; }
.m-text { margin: 0; font-size: 19.500px; line-height: 23.400px; white-space: nowrap; }
.m-intro { margin-top: 24px; }
.box { background: #f4f4f4; border: 1px solid #e6e6e6; border-radius: 6px; padding: 26px 0 0 28px; }
.box-primary { margin-top: 24px; height: 281px; }
.box-add { margin-top: 30px; height: 600px; }
.box-title { font-size: 21px; line-height: 30px; font-weight: 700; color: #0b5cad; }
.check-row { display: flex; align-items: center; height: 30px; margin-top: 22px; font-size: 19.500px; }
.check { width: 20px; height: 20px; margin: -6px 5px 0 0; }
.f-row { display: flex; align-items: center; font-size: 19.500px; }
.f-first { margin-top: 23px; height: 33px; }
.f-second { margin-top: 13px; height: 33px; }
.f-label { margin-top: -4px; white-space: nowrap; }
.f-short { width: 177px; }
.f-long { width: 380px; }
.sel-wrap { position: relative; height: 100%; display: block; flex: none; }
.sel { width: 100%; height: 100%; display: block; appearance: none; -webkit-appearance: none; background: #fff; border: 1px solid #bbb; border-radius: 3px; padding: 0 6px 0 8px; font-family: inherit; font-size: 19.500px; color: #111; }
.sel-chev { position: absolute; right: 7px; top: 50%; margin-top: -4px; width: 14px; height: 9px; color: #111; }
.sel-a { width: 374px; }
.sel-b { width: 375px; }
.sel-focus { border-color: #6aa8ef; box-shadow: 0 0 0 2px #b9d7f8; padding-left: 9px; }
.note { font-size: 16.500px; line-height: 20px; color: #888; white-space: nowrap; }
.note-a { margin-top: 17px; }
.f-dob { margin-top: 24px; height: 34px; }
.f-tag { margin-top: 12px; height: 35px; }
.f-hdr { margin-top: 15px; height: 35px; }
.txt { width: 375px; height: 100%; background: #fff; border: 1px solid #bbb; border-radius: 3px; }
.eg { margin-left: 20px; margin-top: -3px; font-size: 16.500px; color: #888; white-space: nowrap; }
.note-b { margin-top: 4px; }
.pipe-row { display: flex; align-items: center; height: 25px; margin-top: 10px; }
.btn-code { width: 113px; height: 25px; margin-left: 17px; background: #e5e5e5; border: 1px solid #999; border-radius: 4px; display: flex; align-items: center; padding-left: 6px; font-size: 16.500px; color: #333; white-space: nowrap; }
.ico-code { width: 14px; height: 17px; margin-right: 8px; color: #222; }
.btn-smart { width: 161px; height: 25px; margin-left: 15px; background: #74ae74; border: 1px solid #5c9c5c; border-radius: 4px; display: flex; align-items: center; padding-left: 5px; font-size: 16.500px; color: #fff; white-space: nowrap; }
.ico-bolt { width: 11px; height: 14px; margin: 0 1px; }
.force-title { margin-top: 37px; font-size: 19.500px; line-height: 26px; font-weight: 600; color: #0b5cad; white-space: nowrap; }
.m-force { margin-top: 12px; }
.modal-foot { flex: 1; margin-top: 12px; border-top: 2px solid #e5e5e5; display: flex; justify-content: flex-end; align-items: flex-start; gap: 8px; padding: 14px 29px 0 0; }
.btn { height: 45px; padding: 0 21px; background: #e6e6e6; border: 1px solid #ccc; border-radius: 4px; font-family: inherit; font-size: 21px; color: #444; white-space: nowrap; }

/* taskbar */
.taskbar { height: 72px; flex: none; background: #1c2723; border-top: 2px solid #39433f; position: relative; display: flex; align-items: center; }
.task-icons { position: absolute; left: 818px; top: 0; height: 70px; display: flex; align-items: center; }
.task { width: 66.100px; height: 60px; display: flex; align-items: center; justify-content: center; position: relative; flex: none; }
.t-ico { width: 36px; height: 36px; }
.t-dot { position: absolute; left: 29px; top: 52px; width: 8px; height: 8px; border-radius: 50%; background: #8a8f8d; }
.t-letter { font-family: "Open Sans", sans-serif; font-size: 15px; font-weight: 700; fill: #fff; text-anchor: middle; }
.t-sr { font-family: "Open Sans", sans-serif; font-size: 9px; font-weight: 700; fill: #333; text-anchor: middle; }
.t-z { font-family: "Open Sans", sans-serif; font-size: 26px; font-weight: 800; fill: #e03a45; text-anchor: middle; }
.chrome-ico { width: 36px; height: 36px; border-radius: 50%; background: conic-gradient(from -30deg, #ea4335 0 120deg, #fbbc04 120deg 180deg, #34a853 180deg 300deg, #ea4335 300deg 360deg); display: flex; align-items: center; justify-content: center; }
.chrome-in { box-sizing: content-box; width: 12px; height: 12px; border-radius: 50%; background: #4285f4; border: 3px solid #fff; }
.task-active { background: #2c3733; border-radius: 6px; }
.t-badge { position: absolute; left: 33px; top: 3px; width: 24px; height: 24px; border-radius: 50%; background: #5c6bc0; color: #e8eaf6; font-size: 13px; font-weight: 600; display: flex; align-items: center; justify-content: center; }
.t-bar { position: absolute; left: 18px; bottom: 0; width: 24px; height: 5px; border-radius: 3px; background: #6fd0de; }
.tray { margin-left: auto; display: flex; align-items: center; color: #fff; font-size: 17.700px; }
.tray-chev { width: 17px; height: 11px; margin-right: 26px; }
.lang { width: 46px; text-align: center; line-height: 24px; margin-right: 21px; }
.tray-wifi { width: 26px; height: 22px; margin-right: 10px; }
.tray-vol { width: 26px; height: 22px; margin-right: 10px; }
.tray-bat { width: 26px; height: 24px; margin-right: 26px; }
.clock { text-align: right; line-height: 23.500px; padding-right: 29px; }
```
